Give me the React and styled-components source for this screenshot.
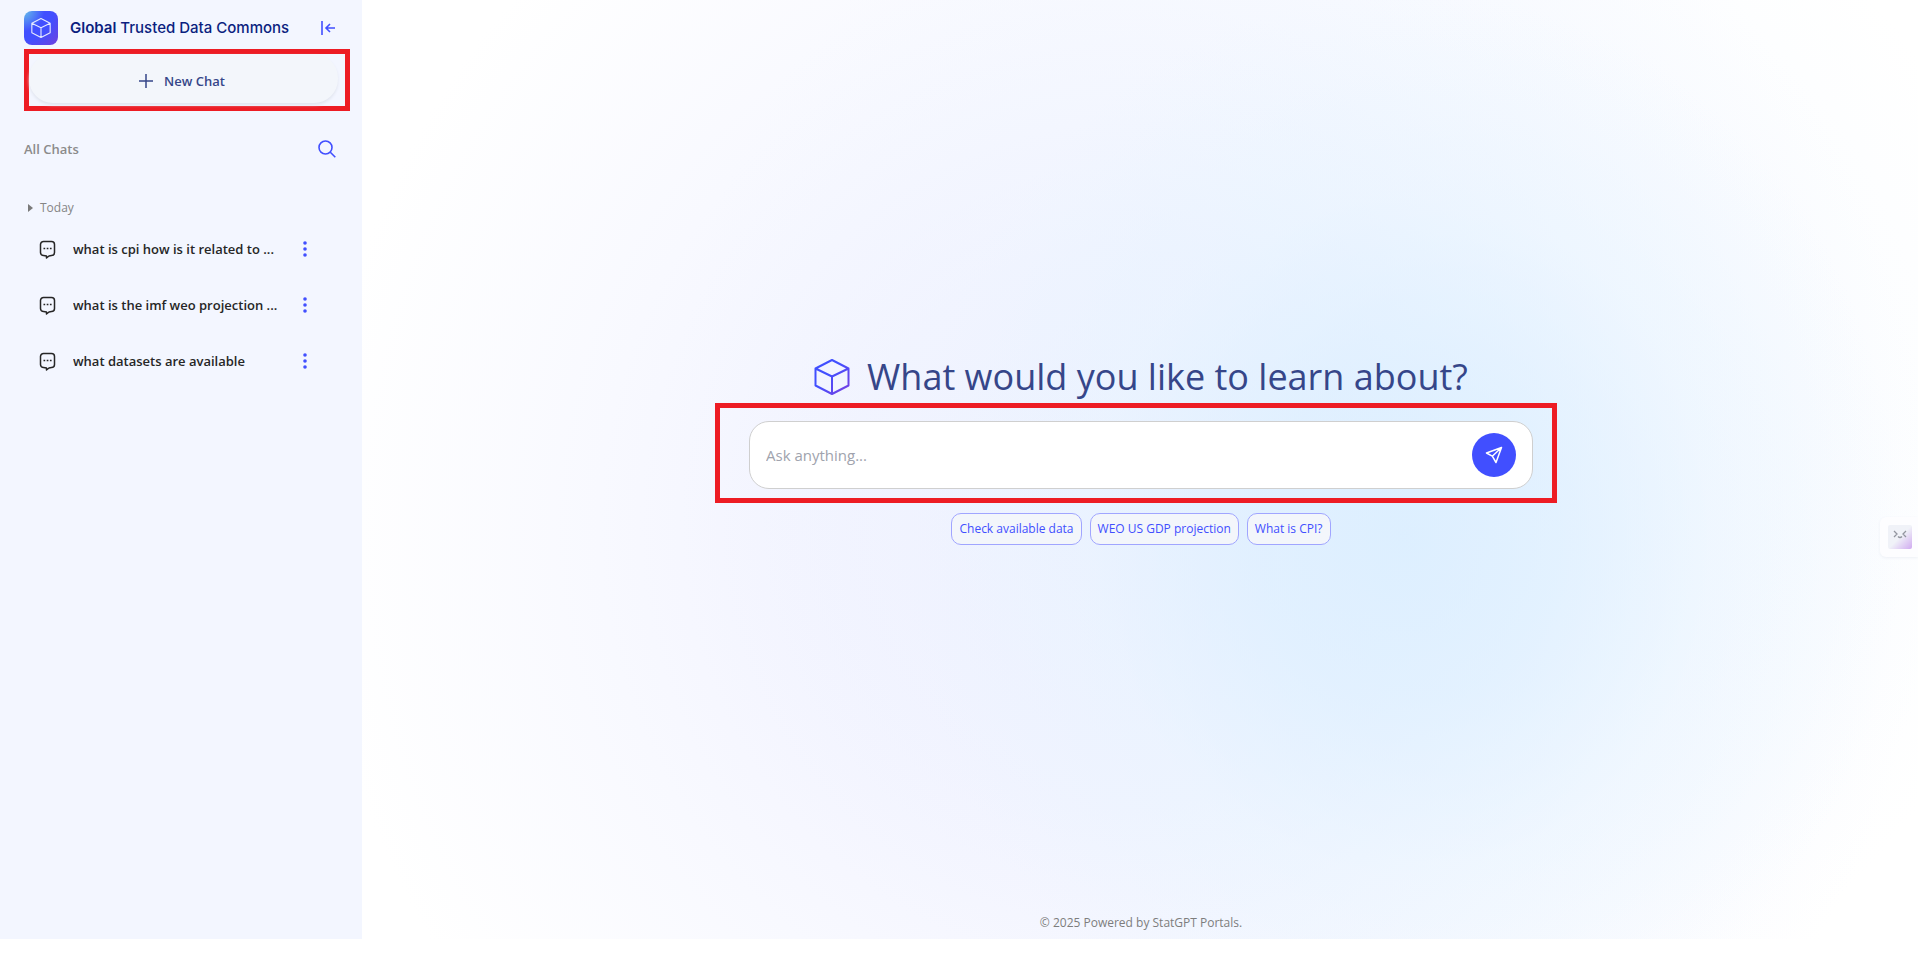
import React from 'react';
import styled, { createGlobalStyle } from 'styled-components';

const Global = createGlobalStyle`
  *, *::before, *::after { box-sizing: border-box; }
  body {
    margin: 0;
    background: #fff;
    font-family: 'Open Sans', 'Noto Sans', sans-serif;
    font-size: 13px;
    color: #212121;
  }
  button { font: inherit; color: inherit; background: none; border: 0; padding: 0; cursor: pointer; }
  svg { display: block; flex: none; }
`;

const Page = styled.div`
  display: flex;
  height: 100vh;
  padding-bottom: 15px;
  overflow: hidden;
`;

const Sidebar = styled.aside`
  flex: 0 0 362px;
  display: flex;
  flex-direction: column;
  background: #f3f6ff;
`;

const Brand = styled.header`
  display: flex;
  align-items: center;
  padding: 11px 24px 4px;
`;

const BrandMark = styled.span`
  display: grid;
  place-items: center;
  width: 34px;
  height: 34px;
  border-radius: 8px;
  background: radial-gradient(circle at 0 0, #64bdea 0%, #414fff 42%, #414fff 60%, #7040dc 100%);
`;

const BrandName = styled.span`
  flex: 1;
  margin-left: 12px;
  font: 500 15px/24px Inter, sans-serif;
  color: #0b1f80;
  white-space: nowrap;

  strong { font-weight: 600; }
`;

const IconButton = styled.button`
  display: grid;
  place-items: center;
  width: ${(p) => p.$size}px;
  height: ${(p) => p.$size}px;
  color: #414fff;
`;

const Highlight = styled.div`
  border: 5px solid #ed1c24;
`;

const NewChatFrame = styled(Highlight)`
  margin: 0 12px 0 24px;
  height: 62px;
  padding-right: 7px;
`;

const NewChat = styled.button`
  display: flex;
  align-items: center;
  justify-content: center;
  gap: 10px;
  width: 100%;
  height: 49px;
  padding: 4px 4px 0 0;
  border-radius: 24px;
  background: #f3f6fb;
  box-shadow: 0 2px 3px #e1e5ef;
  color: #364689;
  font-weight: 600;
`;

const SectionHead = styled.div`
  display: flex;
  align-items: center;
  justify-content: space-between;
  margin: 26px 25px 0 24px;
  height: 24px;

  h2 { margin: 0; font-size: 13px; line-height: 24px; font-weight: 600; color: #8b8b8b; }
`;

const Group = styled.section`
  margin: 37px 24px 0;
`;

const GroupToggle = styled.button`
  display: flex;
  align-items: center;
  gap: 7px;
  padding-left: 4px;
  font-size: 12px;
  line-height: 20px;
  color: #858585;
`;

const ChatList = styled.ul`
  list-style: none;
  margin: 3px 0 0;
  padding: 0;
`;

const ChatRow = styled.li`
  display: flex;
  align-items: center;
  height: 56px;
  padding: 0 21px 0 12px;
`;

const ChatLink = styled.a`
  flex: 1;
  min-width: 0;
  display: flex;
  align-items: center;
  gap: 14px;
  color: #262626;
  text-decoration: none;
  font-weight: 600;
`;

const ChatTitle = styled.span`
  white-space: nowrap;
  overflow: hidden;
  text-overflow: ellipsis;
`;

const Main = styled.main`
  position: relative;
  flex: 1;
  min-width: 0;
  display: flex;
  flex-direction: column;
  align-items: center;
  padding-left: 2px;
  background:
    radial-gradient(ellipse 32% 58% at 67% 57%, rgba(217, 238, 255, 0.8), rgba(219, 239, 255, 0.65) 30%, rgba(228, 244, 255, 0.35) 62%, rgba(240, 249, 255, 0) 100%),
    radial-gradient(ellipse 44% 70% at 64% 46%, rgba(228, 241, 255, 0.5), rgba(238, 246, 255, 0.35) 55%, rgba(247, 251, 255, 0) 100%),
    radial-gradient(ellipse 52% 86% at 49% 56%, #efefff 0%, #f2f3ff 35%, #f8f9ff 65%, #ffffff 100%);
`;

const Hero = styled.div`
  flex: 1;
  display: flex;
  flex-direction: column;
  align-items: center;
  justify-content: center;
  width: 100%;
  padding-bottom: 18px;
`;

const Title = styled.h1`
  display: flex;
  align-items: center;
  gap: 17px;
  margin: 0;
  font-size: 36px;
  line-height: 52px;
  font-weight: 400;
  color: #364689;
  white-space: nowrap;
`;

const AskFrame = styled(Highlight)`
  width: 842px;
  max-width: 100%;
  margin: 0 10px 0 0;
  padding: 13px 19px 9px 29px;
`;

const AskBox = styled.form`
  display: flex;
  align-items: center;
  height: 68px;
  padding: 0 16px;
  border: 1px solid #cfcfcf;
  border-radius: 20px;
  background: #fff;
`;

const AskInput = styled.input`
  flex: 1;
  min-width: 0;
  border: 0;
  padding: 0;
  outline: 0;
  background: none;
  font: inherit;
  font-size: 15px;
  line-height: 24px;

  &::placeholder { color: #a0a3ad; opacity: 1; }
`;

const SendButton = styled.button`
  display: grid;
  place-items: center;
  width: 44px;
  height: 44px;
  border-radius: 50%;
  background: #414fff;
  color: #fff;
`;

const Suggestions = styled.div`
  display: flex;
  gap: 8px;
  margin-top: 10px;
`;

const Suggestion = styled.button`
  height: 32px;
  padding: 0 7px;
  border: 1px solid #a0a5ff;
  border-radius: 10px;
  background: #f3f6fb;
  color: #414fff;
  font-size: 12px;
  font-weight: 500;
  white-space: nowrap;
`;

const Footer = styled.footer`
  padding-bottom: 6px;
  font-size: 12px;
  line-height: 20px;
  font-weight: 500;
  color: #7d7d7d;
`;

const SideTab = styled.button`
  position: absolute;
  right: 0;
  top: 517px;
  width: 38px;
  height: 40px;
  padding-left: 8px;
  border-radius: 6px 0 0 6px;
  background: #fdfdff;
  box-shadow: 0 1px 3px #edf0f6;
`;

const Cube = ({ size, stroke, width }) => (
  <svg width={size} height={size} viewBox="0 0 36 36" fill="none" stroke={stroke} strokeWidth={width} strokeLinejoin="round" aria-hidden="true">
    <defs>
      <linearGradient id="cube" x1="0" y1="0" x2="1" y2="1">
        <stop offset="0.4" stopColor="#414fff" />
        <stop offset="1" stopColor="#7a3fe0" />
      </linearGradient>
    </defs>
    <path d="M18 1 34.500 9.500v17L18 35 1.500 26.500v-17zM1.500 9.500 18 17.500l16.500-8M18 17.500V35" />
  </svg>
);

const ChatIcon = () => (
  <svg width="23" height="23" viewBox="0 0 23 23" fill="none" stroke="#262626" strokeWidth="1.500" strokeLinejoin="round" aria-hidden="true">
    <path d="M7.500 3.500h8a3 3 0 0 1 3 3v8a3 3 0 0 1-3 3l-2.500.5-2.500 2v-2l-3-.5A3 3 0 0 1 4.500 14.500v-8a3 3 0 0 1 3-3z" />
    <path d="M7.500 10.500h1.700M10.700 10.500h1.700M13.900 10.500h1.700" />
  </svg>
);

const chats = [
  'what is cpi how is it related to ...',
  'what is the imf weo projection ...',
  'what datasets are available',
];

const suggestions = ['Check available data', 'WEO US GDP projection', 'What is CPI?'];

export default function App() {
  return (
    <>
      <Global />
      <Page>
        <Sidebar>
          <Brand>
            <BrandMark><Cube size={20} stroke="#e6eaff" width={2} /></BrandMark>
            <BrandName><strong>Global</strong> Trusted Data Commons</BrandName>
            <IconButton $size={20} aria-label="Collapse sidebar">
              <svg width="18" height="18" viewBox="0 0 18 18" fill="none" stroke="currentColor" strokeWidth="1.600">
                <path d="M3 2v14M16 9H7M11 5 7 9l4 4" />
              </svg>
            </IconButton>
          </Brand>
          <NewChatFrame>
            <NewChat>
              <svg width="16" height="16" viewBox="0 0 16 16" fill="none" stroke="currentColor" strokeWidth="1.500"><path d="M8 1v14M1 8h14" /></svg>
              New Chat
            </NewChat>
          </NewChatFrame>
          <SectionHead>
            <h2>All Chats</h2>
            <IconButton $size={20} aria-label="Search chats">
              <svg width="20" height="20" viewBox="0 0 20 20" fill="none" stroke="currentColor" strokeWidth="1.600"><circle cx="8.500" cy="8.500" r="6.500" /><path d="m13.300 13.300 5 5" /></svg>
            </IconButton>
          </SectionHead>
          <Group>
            <GroupToggle>
              <svg width="5" height="8" viewBox="0 0 5 8" fill="#7a7a7a"><path d="M0 0 5 4 0 8z" /></svg>
              Today
            </GroupToggle>
            <ChatList>
              {chats.map((chat) => (
                <ChatRow key={chat}>
                  <ChatLink href="#"><ChatIcon /><ChatTitle>{chat}</ChatTitle></ChatLink>
                  <IconButton $size={24} aria-label="Chat options">
                    <svg width="16" height="16" viewBox="0 0 16 16" fill="currentColor"><circle cx="8" cy="2" r="1.800" /><circle cx="8" cy="8" r="1.800" /><circle cx="8" cy="14" r="1.800" /></svg>
                  </IconButton>
                </ChatRow>
              ))}
            </ChatList>
          </Group>
        </Sidebar>
        <Main>
          <Hero>
            <Title><Cube size={36} stroke="url(#cube)" width={2} />What would you like to learn about?</Title>
            <AskFrame>
              <AskBox onSubmit={(e) => e.preventDefault()}>
                <AskInput placeholder="Ask anything..." aria-label="Ask anything" />
                <SendButton aria-label="Send">
                  <svg width="18" height="18" viewBox="0 0 18 18" fill="none" stroke="currentColor" strokeWidth="1.500" strokeLinejoin="round"><path d="M16.500 1.500 1.500 7l5.800 3.200L11 16.500zM16.500 1.500 7.300 10.200" /></svg>
                </SendButton>
              </AskBox>
            </AskFrame>
            <Suggestions>
              {suggestions.map((s) => <Suggestion key={s}>{s}</Suggestion>)}
            </Suggestions>
          </Hero>
          <Footer>© 2025 Powered by StatGPT Portals.</Footer>
          <SideTab aria-label="Open assistant">
            <svg width="24" height="24" viewBox="0 0 24 24" aria-hidden="true">
              <defs>
                <linearGradient id="tab" x1="0" y1="0" x2="1" y2="1">
                  <stop offset="0.500" stopColor="#f0f2f8" />
                  <stop offset="1" stopColor="#d0aaf0" />
                </linearGradient>
              </defs>
              <rect width="24" height="24" rx="2" fill="url(#tab)" />
              <path d="m6 6 3 3-3 3M18 6l-3 3 3 3M10 11.500q2 2 4 0" fill="none" stroke="#92959f" strokeWidth="1.300" />
            </svg>
          </SideTab>
        </Main>
      </Page>
    </>
  );
}
